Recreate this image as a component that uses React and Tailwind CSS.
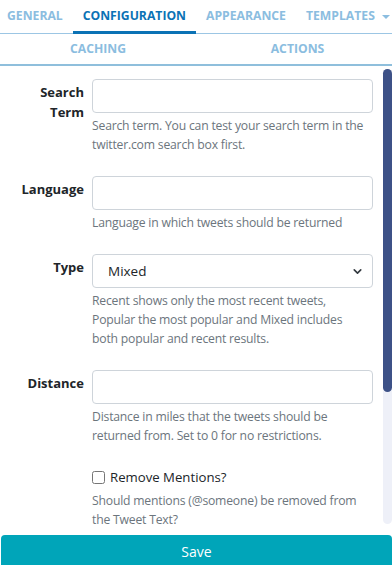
import { ChevronDown } from 'lucide-react';

const fields = [
  {
    id: 'search',
    label: 'Search Term',
    kind: 'text',
    help: ['Search term. You can test your search term in the', 'twitter.com search box first.'],
  },
  {
    id: 'language',
    label: 'Language',
    kind: 'text',
    help: ['Language in which tweets should be returned'],
  },
  {
    id: 'type',
    label: 'Type',
    kind: 'select',
    help: [
      'Recent shows only the most recent tweets,',
      'Popular the most popular and Mixed includes',
      'both popular and recent results.',
    ],
  },
  {
    id: 'distance',
    label: 'Distance',
    kind: 'text',
    help: ['Distance in miles that the tweets should be', 'returned from. Set to 0 for no restrictions.'],
  },
  {
    id: 'mentions',
    label: 'Remove Mentions?',
    kind: 'check',
    help: ['Should mentions (@someone) be removed from', 'the Tweet Text?'],
  },
];

function Field({ field }) {
  return (
    <div className="flex mb-[22px]">
      <div className="w-[84px] pl-[14px] text-right shrink-0">
        {field.kind !== 'check' && (
          <label
            htmlFor={field.id}
            className="block pt-[3px] text-[13px] leading-[20px] font-bold text-[#212529]"
          >
            {field.label}
          </label>
        )}
      </div>
      <div className="ml-[8px] flex-1 min-w-0">
        {field.kind === 'text' && (
          <input
            id={field.id}
            type="text"
            className="block w-full h-[34px] rounded-[4px] border border-[#ced4da] bg-white px-3 outline-none"
          />
        )}
        {field.kind === 'select' && (
          <div className="relative">
            <select
              id={field.id}
              defaultValue="mixed"
              className="block w-full h-[34px] appearance-none rounded-[4px] border border-[#ced4da] bg-white pl-[15px] text-[13.5px] text-[#212529] outline-none"
            >
              <option value="recent">Recent</option>
              <option value="popular">Popular</option>
              <option value="mixed">Mixed</option>
            </select>
            <ChevronDown
              size={13}
              strokeWidth={3}
              className="absolute right-[9px] top-[11px] text-[#343a40] pointer-events-none"
            />
          </div>
        )}
        {field.kind === 'check' && (
          <label className="flex items-center h-[21px] text-[13.2px] text-[#212529]">
            <input type="checkbox" className="m-0 w-[13px] h-[13px] mr-[5px]" />
            {field.label}
          </label>
        )}
        <p className="mt-[3px] text-[12.2px] tracking-[-0.2px] leading-[19px] text-[#6c757d]">
          {field.help.map((line, i) => (
            <span key={i} className="block whitespace-nowrap">
              {line}
            </span>
          ))}
        </p>
      </div>
    </div>
  );
}

export default function App() {
  return (
    <div
      className="h-[565px] w-[392px] overflow-hidden bg-white flex flex-col"
      style={{ fontFamily: '"Open Sans", "Noto Sans", sans-serif' }}
    >
      <div className="flex h-[34px] border-b border-[#9cc6e4] text-[12.2px] font-bold uppercase text-[#8bbde0] shrink-0 whitespace-nowrap">
        <div className="flex items-center pl-[7px] pr-[10px]">General</div>
        <div className="relative flex items-center px-[10px] text-[#0b72b5]">
          Configuration
          <span className="absolute left-0 right-0 bottom-[-1px] h-[3px] bg-[#0b72b5]" />
        </div>
        <div className="flex items-center px-[10px]">Appearance</div>
        <div className="flex items-center pl-[10px]">
          Templates
          <span className="ml-[7px] w-0 h-0 border-x-[4px] border-x-transparent border-t-[4px] border-t-[#8bbde0]" />
        </div>
      </div>
      <div className="grid grid-cols-2 h-[32px] border-b-2 border-[#8fbfdc] text-[12.2px] font-bold uppercase text-[#8bbde0] shrink-0">
        <div className="flex items-center justify-center">Caching</div>
        <div className="flex items-center justify-center pl-[7px]">Actions</div>
      </div>
      <div className="flex h-[461px] shrink-0">
        <div className="flex-1 min-w-0 overflow-hidden pt-[13px] pr-[10px]">
          {fields.map((field) => (
            <Field key={field.id} field={field} />
          ))}
        </div>
        <div className="w-[9px] shrink-0 py-[3px]">
          <div className="h-full rounded-[5px] bg-[#eef0f8]">
            <div className="h-[323px] rounded-[5px] bg-[#3d5187]" />
          </div>
        </div>
      </div>
      <button className="mt-[8px] ml-[1px] h-[32px] shrink-0 rounded-t-[4px] bg-[#00a5b9] text-[14px] text-white">
        Save
      </button>
    </div>
  );
}
